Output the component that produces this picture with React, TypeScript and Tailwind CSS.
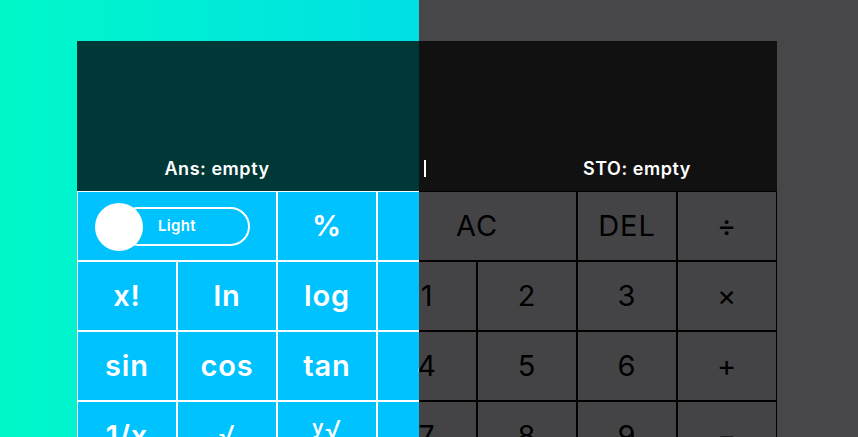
import type { ReactNode } from 'react';

type Theme = 'light' | 'dark';

interface Key {
    label: ReactNode;
    span?: 2;
    toggle?: boolean;
}

const keys: Key[] = [
    { label: null, span: 2, toggle: true },
    { label: '%' },
    { label: 'AC', span: 2 },
    { label: 'DEL' },
    { label: '÷' },
    { label: 'x!' },
    { label: 'ln' },
    { label: 'log' },
    { label: '1' },
    { label: '2' },
    { label: '3' },
    { label: '×' },
    { label: 'sin' },
    { label: 'cos' },
    { label: 'tan' },
    { label: '4' },
    { label: '5' },
    { label: '6' },
    { label: '+' },
    { label: '1/x' },
    { label: <span className="relative -top-[2px] text-[26px] font-normal">√</span> },
    {
        label: (
            <span className="relative -top-[6px] flex items-start">
                <span className="text-[20px] leading-none">y</span>
                <span className="text-[26px] font-normal leading-none">√</span>
            </span>
        ),
    },
    { label: '7' },
    { label: '8' },
    { label: '9' },
    { label: '−' },
];

function ThemeToggle({ theme }: { theme: Theme }) {
    return (
        <div className="relative h-full w-full">
            <div className="absolute left-[41px] top-[15px] flex h-[39px] w-[131px] items-center rounded-full border-2 border-white pl-[37px]">
                <span className="text-[15px] font-semibold tracking-[0.02em] text-white">
                    {theme === 'light' ? 'Light' : 'Dark'}
                </span>
            </div>
            <div className="absolute left-[17px] top-[11px] h-[48px] w-[48px] rounded-full bg-white" />
        </div>
    );
}

function Calculator({ theme }: { theme: Theme }) {
    const light = theme === 'light';

    return (
        <div
            className={`h-[437px] w-[858px] overflow-hidden pl-[77px] pt-[41px] ${
                light ? 'bg-gradient-to-r from-[#00f8c8] to-[#00c4ff]' : 'bg-[#474749]'
            }`}
            style={{ fontFamily: 'Inter, "Noto Sans", sans-serif' }}
        >
            <div className="w-[700px]">
                {/* 显示区域 */}
                <div className={`flex h-[150px] flex-col justify-end pb-[9px] ${light ? 'bg-[#003837]' : 'bg-[#111111]'}`}>
                    <div className="flex items-center text-[18px] font-semibold tracking-[0.03em] text-white">
                        <div className="w-[280px] text-center">Ans: empty</div>
                        <div className="flex flex-1 justify-center pr-[4px]">
                            <span className="h-[17px] w-[2px] bg-white" />
                        </div>
                        <div className="w-[280px] text-center">STO: empty</div>
                    </div>
                </div>

                {/* 按键 */}
                <div className="grid grid-cols-[repeat(7,100px)] auto-rows-[70px]">
                    {keys.map((key, index) => (
                        <div
                            key={index}
                            className={`flex items-center justify-center border text-[29px] tracking-[0.03em] ${
                                key.span === 2 ? 'col-span-2' : ''
                            } ${
                                light
                                    ? 'border-white bg-[#00c2ff] font-semibold text-white'
                                    : 'border-black bg-[#444446] font-normal text-black'
                            }`}
                        >
                            {key.toggle ? <ThemeToggle theme={theme} /> : key.label}
                        </div>
                    ))}
                </div>
            </div>
        </div>
    );
}

export default function App() {
    return (
        <div className="relative h-[437px] w-[858px] overflow-hidden">
            <Calculator theme="dark" />
            {/* 浅色主题覆盖左半边 */}
            <div className="absolute left-0 top-0 h-full w-[419px] overflow-hidden">
                <Calculator theme="light" />
            </div>
        </div>
    );
}
